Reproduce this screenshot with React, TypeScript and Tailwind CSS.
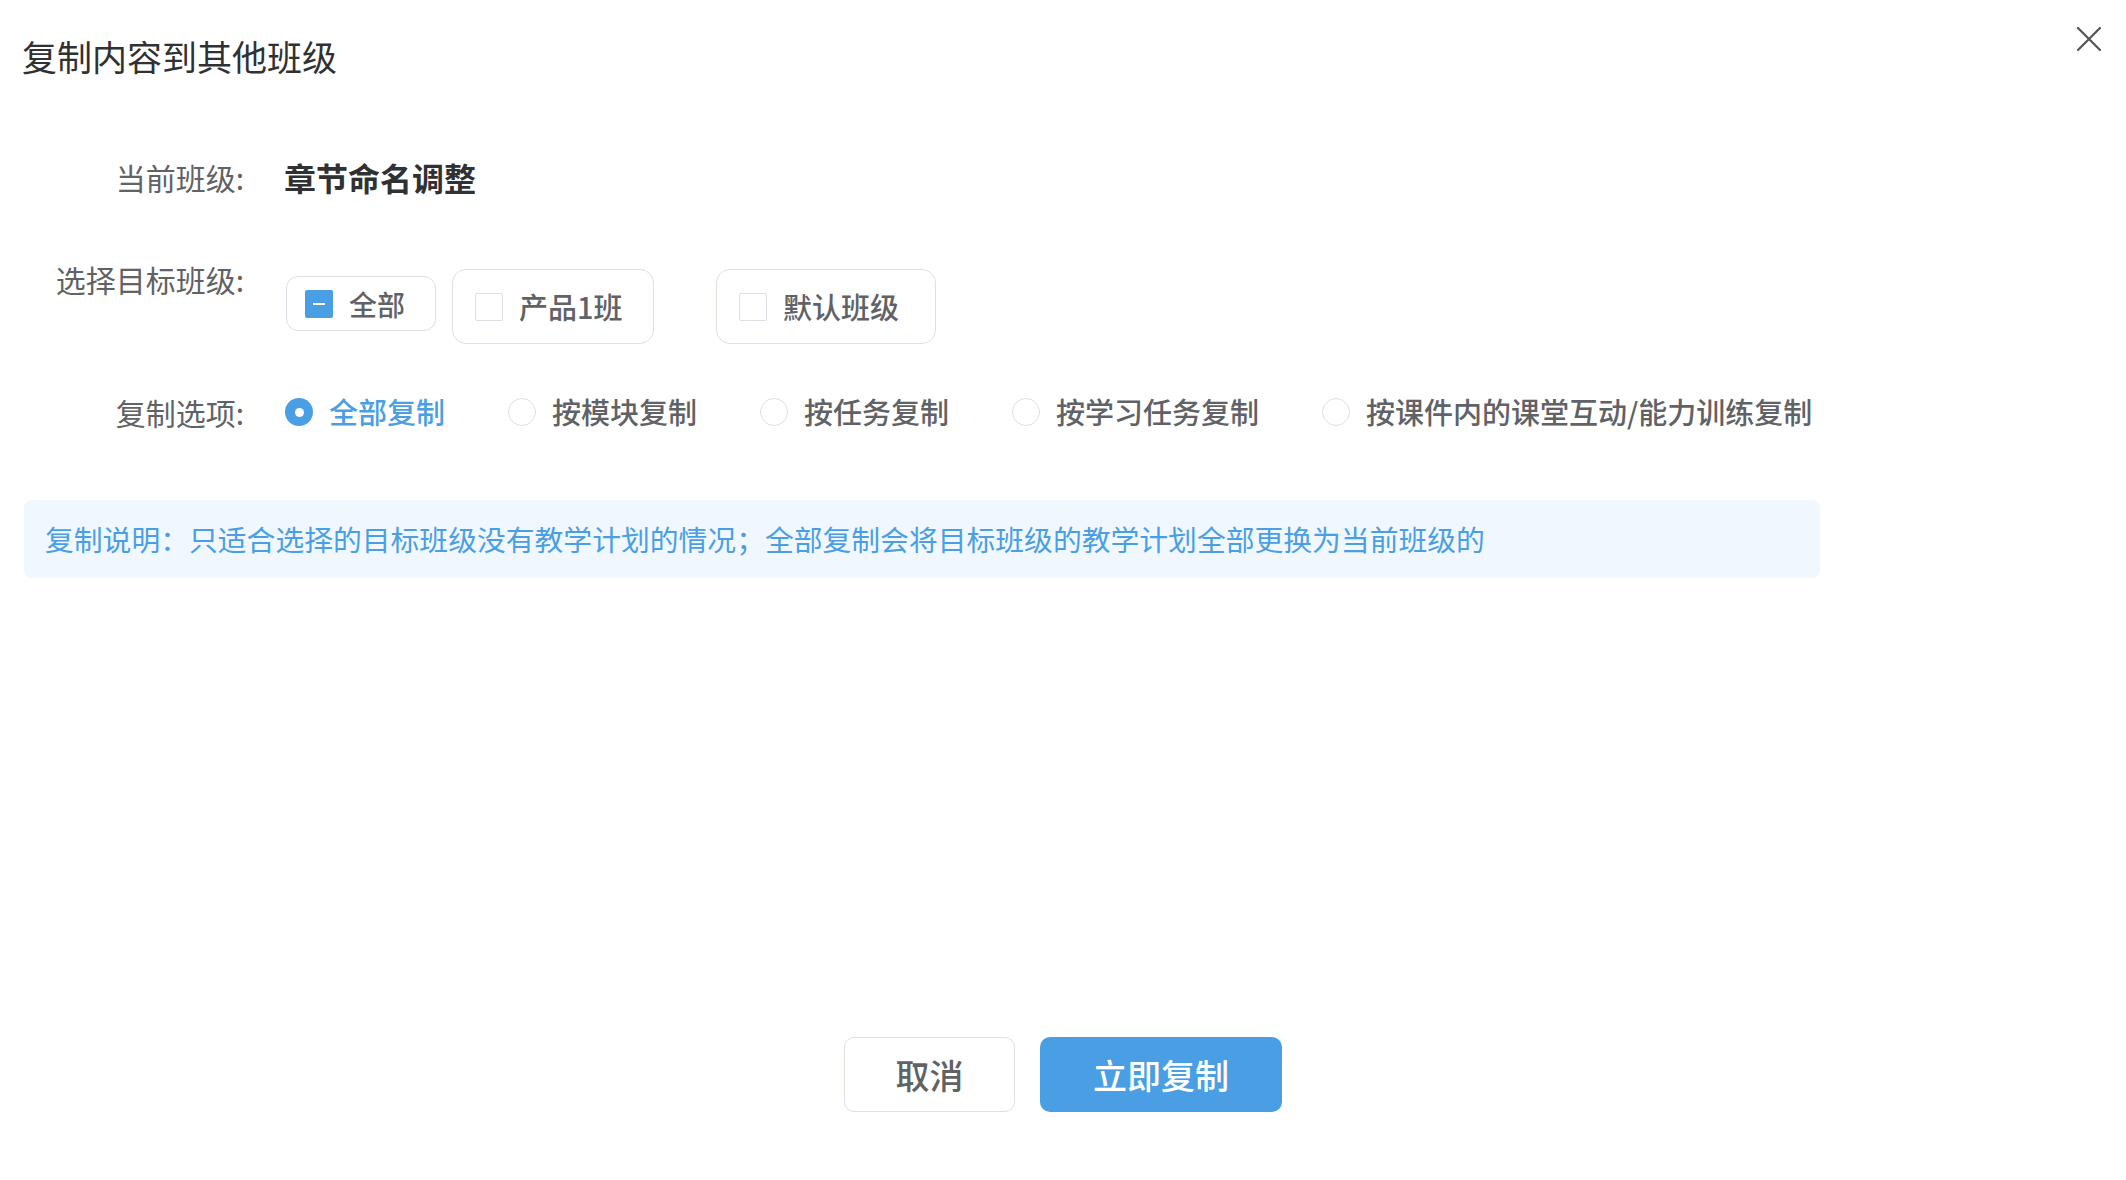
import { useState } from 'react';

const FONT = '"PingFang SC", "Noto Sans CJK SC", "Noto Sans", sans-serif';

const CLASSES = [
  { id: 'p1', name: '产品1班', width: 'w-[202px]', gap: 'ml-[16px]' },
  { id: 'def', name: '默认班级', width: 'w-[220px]', gap: 'ml-[62px]' },
];

const OPTIONS = ['全部复制', '按模块复制', '按任务复制', '按学习任务复制', '按课件内的课堂互动/能力训练复制'];

function Checkbox({ state }: { state: 'none' | 'some' | 'all' }) {
  if (state === 'none') {
    return <span className="block w-[28px] h-[28px] shrink-0 rounded-[2px] border border-[#dcdfe6] bg-white" />;
  }
  return (
    <span className="flex w-[28px] h-[28px] shrink-0 items-center justify-center rounded-[2px] bg-[#4a9fe4]">
      {state === 'some' ? <span className="block w-[12px] h-[2px] bg-white" /> : <span className="text-white text-sm">✓</span>}
    </span>
  );
}

function Radio({ checked }: { checked: boolean }) {
  if (checked) {
    return (
      <span className="flex w-[28px] h-[28px] shrink-0 items-center justify-center rounded-full bg-[#4a9fe4]">
        <span className="block w-[9px] h-[9px] rounded-full bg-white" />
      </span>
    );
  }
  return <span className="block w-[28px] h-[28px] shrink-0 rounded-full border border-[#dcdfe6] bg-white" />;
}

export default function App() {
  const [picked, setPicked] = useState<string[]>([]);
  const [option, setOption] = useState(0);

  const allState = picked.length === 0 ? 'some' : picked.length === CLASSES.length ? 'all' : 'some';
  const toggle = (id: string) =>
    setPicked((p) => (p.includes(id) ? p.filter((x) => x !== id) : [...p, id]));

  return (
    <div className="relative w-full h-[1180px] bg-white overflow-hidden" style={{ fontFamily: FONT }}>
      {/* 标题 */}
      <div className="h-[110px] flex items-center pl-[22px]">
        <h1 className="text-[35px] leading-none font-normal text-[#303133]">复制内容到其他班级</h1>
      </div>
      <button className="absolute top-[27px] right-[25px] w-[24px] h-[24px] text-[#555]">
        <svg viewBox="0 0 24 24" width="24" height="24" fill="none" stroke="currentColor" strokeWidth="2.2" strokeLinecap="round">
          <path d="M1 1L23 23M23 1L1 23" />
        </svg>
      </button>

      {/* 当前班级 */}
      <div className="mt-[42px] h-[50px] flex items-center">
        <div className="w-[244px] text-right text-[30px] text-[#606266]">当前班级:</div>
        <div className="ml-[40px] text-[32px] font-bold text-[#303133]">章节命名调整</div>
      </div>

      {/* 选择目标班级 */}
      <div className="mt-[63px] flex items-start">
        <div className="w-[244px] h-[28px] flex items-center justify-end text-[30px] text-[#606266]">选择目标班级:</div>
        <div className="ml-[42px] mt-[4px] flex items-start">
          <button
            onClick={() => setPicked(picked.length === CLASSES.length ? [] : CLASSES.map((c) => c.id))}
            className="mt-[7px] w-[150px] h-[55px] flex items-center pl-[18px] rounded-[12px] border border-[#dcdfe6] bg-white"
          >
            <Checkbox state={allState} />
            <span className="ml-[16px] text-[28px] font-medium text-[#606266]">全部</span>
          </button>
          {CLASSES.map((c) => (
            <button
              key={c.id}
              onClick={() => toggle(c.id)}
              className={`${c.width} ${c.gap} h-[75px] flex items-center pl-[22px] rounded-[14px] border border-[#dcdfe6] bg-white`}
            >
              <Checkbox state={picked.includes(c.id) ? 'all' : 'none'} />
              <span className="ml-[16px] text-[29px] font-medium text-[#606266]">{c.name}</span>
            </button>
          ))}
        </div>
      </div>

      {/* 复制选项 */}
      <div className="mt-[48px] h-[40px] flex items-center">
        <div className="w-[244px] text-right text-[30px] text-[#606266]">复制选项:</div>
        <div className="ml-[41px] flex items-center">
          {OPTIONS.map((o, i) => (
            <button key={o} onClick={() => setOption(i)} className="mr-[63px] flex items-center">
              <Radio checked={option === i} />
              <span
                className={`ml-[16px] text-[29px] font-medium ${option === i ? 'text-[#4a9fe4]' : 'text-[#606266]'}`}
              >
                {o}
              </span>
            </button>
          ))}
        </div>
      </div>

      {/* 复制说明 */}
      <div className="mt-[68px] ml-[24px] w-[1796px] h-[78px] flex items-center pl-[21px] rounded-[8px] bg-[#f1f7fe]">
        <span className="text-[28.8px] text-[#4a9fe4]">
          复制说明：只适合选择的目标班级没有教学计划的情况；全部复制会将目标班级的教学计划全部更换为当前班级的
        </span>
      </div>

      {/* 底部按钮 */}
      <div className="mt-[459px] flex justify-center gap-[25px]">
        <button className="w-[171px] h-[75px] rounded-[10px] border border-[#dcdfe6] bg-white text-[34px] font-medium text-[#606266]">
          取消
        </button>
        <button className="w-[242px] h-[75px] rounded-[10px] bg-[#4a9fe4] text-[34px] font-medium text-white">
          立即复制
        </button>
      </div>
    </div>
  );
}
